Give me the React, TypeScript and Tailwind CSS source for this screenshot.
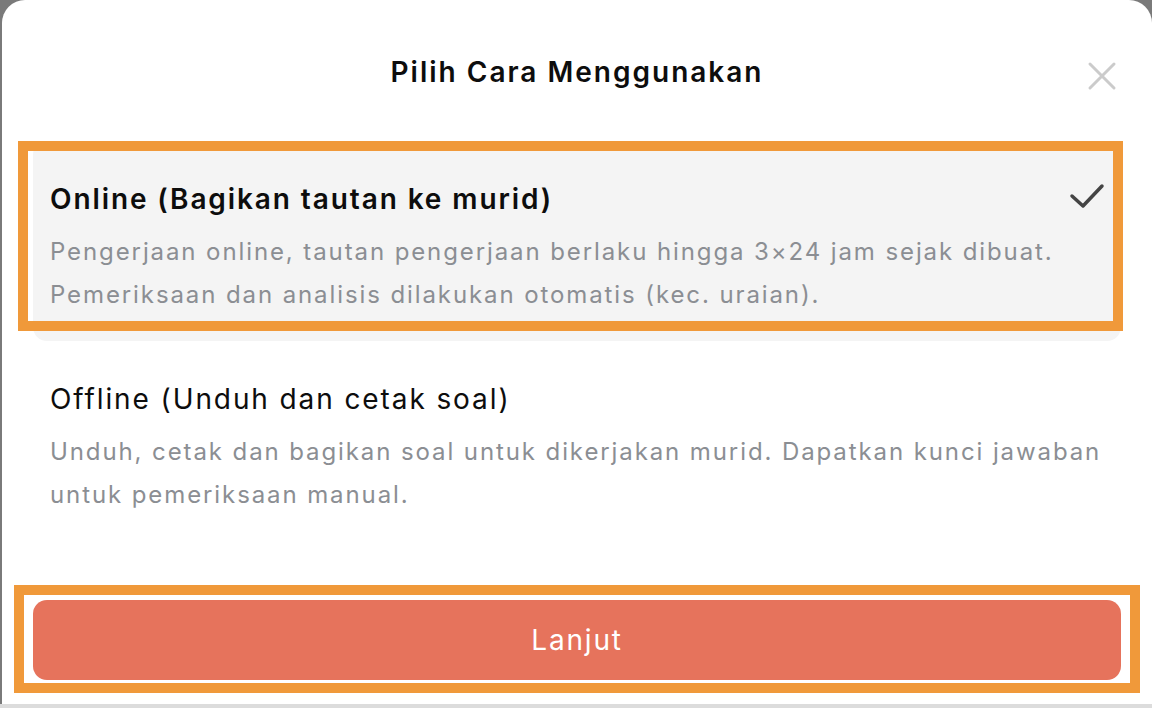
import React from "react";

const font = { fontFamily: "Inter, 'Noto Sans', sans-serif" };

interface OptionProps {
  title: string;
  desc: string;
  selected?: boolean;
}

function Option({ title, desc, selected }: OptionProps) {
  return (
    <div
      className={`relative pl-[17px] pr-[8px] pt-[40px] pb-[25px] rounded-[14px] ${
        selected ? "bg-[#f4f4f4]" : ""
      }`}
    >
      <div
        className={`text-[28px] leading-[36px] tracking-[1.9px] text-[#0d0d0d] ${
          selected ? "font-semibold" : "font-normal"
        }`}
      >
        {title}
      </div>
      <p className="mt-[13px] text-[24px] leading-[43px] tracking-[1.9px] text-[#8b8e93]">{desc}</p>
      {selected && (
        <svg
          className="absolute right-[16px] top-[42px]"
          width="36"
          height="30"
          viewBox="0 0 36 30"
          fill="none"
        >
          <path
            d="M3 13 L14 23 L33 3"
            stroke="#444"
            strokeWidth="3.5"
            strokeLinecap="round"
            strokeLinejoin="round"
          />
        </svg>
      )}
    </div>
  );
}

export default function App() {
  return (
    <div className="relative w-[1152px] h-[708px] bg-[#7a7a7a] flex flex-col overflow-hidden" style={font}>
      <div className="ml-[2px] h-[704px] bg-white rounded-t-[23px] flex flex-col px-[31px] pb-[24px]">
        <div className="relative h-[141px] flex items-start justify-center pt-[52px]">
          <h1 className="text-[28px] leading-[40px] font-semibold tracking-[2px] text-[#0d0d0d]">
            Pilih Cara Menggunakan
          </h1>
          <button className="absolute right-[3px] top-[60px] p-0">
            <svg width="32" height="32" viewBox="0 0 32 32" fill="none">
              <path
                d="M4 4 L28 28 M28 4 L4 28"
                stroke="#cbcbcb"
                strokeWidth="3"
                strokeLinecap="round"
              />
            </svg>
          </button>
        </div>
        <Option
          selected
          title="Online (Bagikan tautan ke murid)"
          desc="Pengerjaan online, tautan pengerjaan berlaku hingga 3×24 jam sejak dibuat. Pemeriksaan dan analisis dilakukan otomatis (kec. uraian)."
        />
        <Option
          title="Offline (Unduh dan cetak soal)"
          desc="Unduh, cetak dan bagikan soal untuk dikerjakan murid. Dapatkan kunci jawaban untuk pemeriksaan manual."
        />
        <div className="flex-1" />
        <button className="h-[80px] w-full rounded-[14px] bg-[#e6735c] text-white text-[28px] tracking-[1.8px] font-normal">
          Lanjut
        </button>
      </div>
      <div className="h-[4px] bg-[#dcdcdc]" />

      {/* annotation frames */}
      <div className="absolute left-[18px] top-[141px] w-[1105px] h-[190px] border-[10px] border-[#f0993a] pointer-events-none" />
      <div className="absolute left-[14px] top-[585px] w-[1126px] h-[108px] border-[10px] border-[#f0993a] pointer-events-none" />
    </div>
  );
}
